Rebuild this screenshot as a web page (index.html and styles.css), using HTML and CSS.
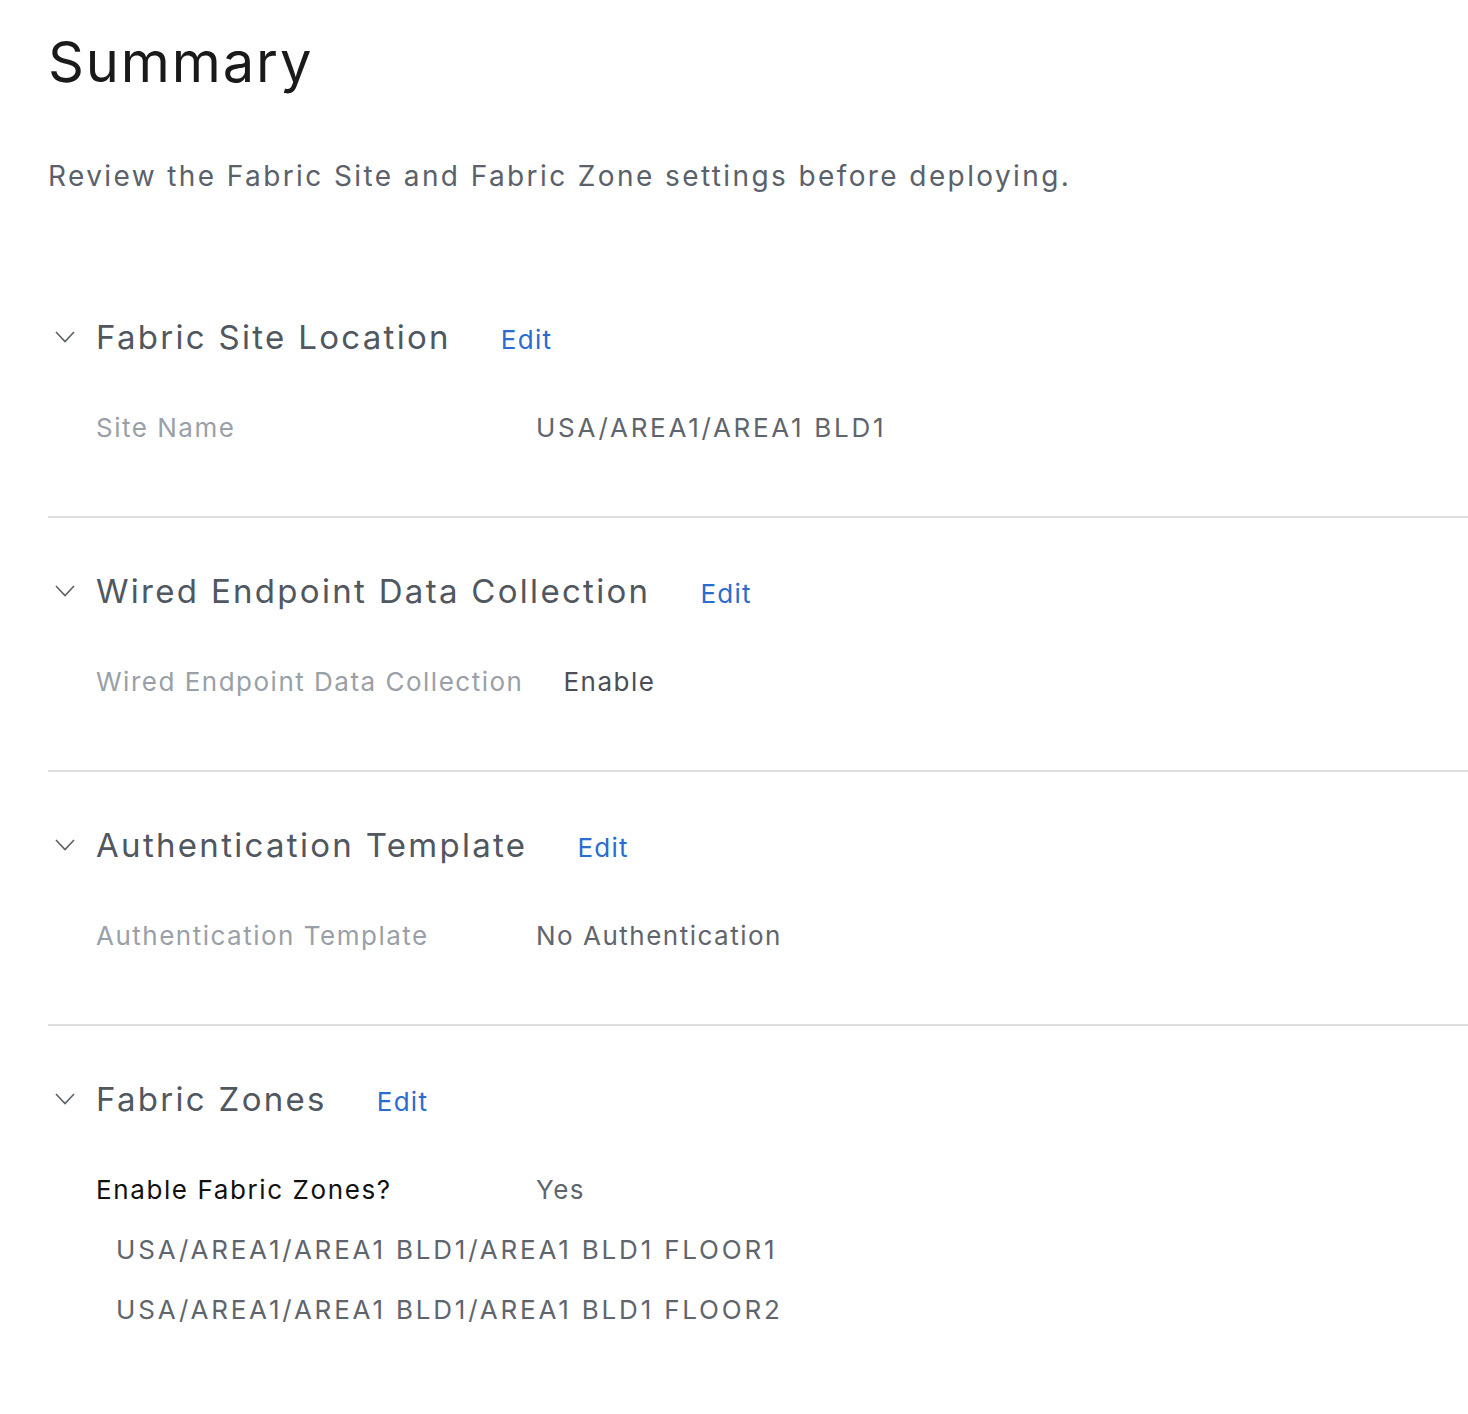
FILE: index.html
```html
<!DOCTYPE html>
<html lang="en">
<head>
<meta charset="utf-8">
<title>Summary</title>
<link rel="stylesheet" href="styles.css">
</head>
<body>
<main class="page">
  <h1 class="page-title">Summary</h1>
  <p class="page-desc">Review the Fabric Site and Fabric Zone settings before deploying.</p>

  <section class="section section-first">
    <div class="section-head">
      <svg class="chevron" viewBox="0 0 20 12" width="20" height="12"><path d="M1 1 L10 10.5 L19 1" fill="none" stroke="#5a6068" stroke-width="1.6"/></svg>
      <h2 class="section-title">Fabric Site Location</h2>
      <a class="edit" href="#">Edit</a>
    </div>
    <div class="row">
      <span class="label">Site Name</span>
      <span class="value value-caps">USA/AREA1/AREA1 BLD1</span>
    </div>
  </section>

  <section class="section">
    <div class="section-head">
      <svg class="chevron" viewBox="0 0 20 12" width="20" height="12"><path d="M1 1 L10 10.5 L19 1" fill="none" stroke="#5a6068" stroke-width="1.6"/></svg>
      <h2 class="section-title">Wired Endpoint Data Collection</h2>
      <a class="edit" href="#">Edit</a>
    </div>
    <div class="row">
      <span class="label">Wired Endpoint Data Collection</span>
      <span class="value value-dark">Enable</span>
    </div>
  </section>

  <section class="section">
    <div class="section-head">
      <svg class="chevron" viewBox="0 0 20 12" width="20" height="12"><path d="M1 1 L10 10.5 L19 1" fill="none" stroke="#5a6068" stroke-width="1.6"/></svg>
      <h2 class="section-title">Authentication Template</h2>
      <a class="edit" href="#">Edit</a>
    </div>
    <div class="row">
      <span class="label">Authentication Template</span>
      <span class="value">No Authentication</span>
    </div>
  </section>

  <section class="section section-last">
    <div class="section-head">
      <svg class="chevron" viewBox="0 0 20 12" width="20" height="12"><path d="M1 1 L10 10.5 L19 1" fill="none" stroke="#5a6068" stroke-width="1.6"/></svg>
      <h2 class="section-title">Fabric Zones</h2>
      <a class="edit" href="#">Edit</a>
    </div>
    <div class="row">
      <span class="label label-strong">Enable Fabric Zones?</span>
      <span class="value">Yes</span>
    </div>
    <ul class="zone-list">
      <li class="zone">USA/AREA1/AREA1 BLD1/AREA1 BLD1 FLOOR1</li>
      <li class="zone">USA/AREA1/AREA1 BLD1/AREA1 BLD1 FLOOR2</li>
    </ul>
  </section>
</main>
</body>
</html>
```

FILE: styles.css
```css
* { box-sizing: border-box; }

html, body {
  margin: 0;
  padding: 0;
  background: #ffffff;
}

body {
  font-family: Inter, "Liberation Sans", Arial, sans-serif;
  color: #5b626b;
}

.page {
  padding: 0 0 60px 48px;
}

.page-title {
  margin: 0;
  padding-top: 28px;
  font-size: 56px;
  line-height: 68px;
  font-weight: 400;
  letter-spacing: 1.9px;
  color: #1a1a1a;
}

.page-desc {
  margin: 0;
  padding-top: 60px;
  font-size: 28px;
  line-height: 40px;
  letter-spacing: 2.4px;
  color: #5a616a;
}

.section {
  padding: 49px 0 68px 0;
  border-bottom: 2px solid #dfdfdf;
}

.section-first {
  padding-top: 117px;
}

.section-last {
  border-bottom: none;
}

.section-head {
  display: flex;
  align-items: baseline;
  height: 48px;
  line-height: 48px;
  padding-left: 7px;
}

.chevron {
  align-self: center;
  margin-right: 21px;
  flex: none;
}

.section-title {
  margin: 0;
  font-size: 33px;
  font-weight: 400;
  letter-spacing: 2.3px;
  color: #50575f;
}

.edit {
  margin-left: 50px;
  font-size: 26px;
  letter-spacing: 1.25px;
  color: #2a6ccf;
  text-decoration: none;
}

.row {
  display: flex;
  align-items: baseline;
  margin-top: 47px;
  padding-left: 48px;
  height: 40px;
  line-height: 40px;
  font-size: 26px;
  letter-spacing: 1.5px;
}

.label {
  min-width: 400px;
  margin-right: 40px;
  color: #9aa0a7;
}

.label-strong {
  color: #111111;
  letter-spacing: 1.6px;
}

.value {
  color: #5f656d;
}

.value-caps {
  letter-spacing: 2.7px;
}

.value-dark {
  color: #4a4f56;
}

.zone-list {
  list-style: none;
  margin: 20px 0 0 0;
  padding: 0 0 0 68px;
}

.zone {
  height: 40px;
  line-height: 40px;
  margin-bottom: 20px;
  font-size: 26px;
  letter-spacing: 2.8px;
  color: #5f656d;
}
```
